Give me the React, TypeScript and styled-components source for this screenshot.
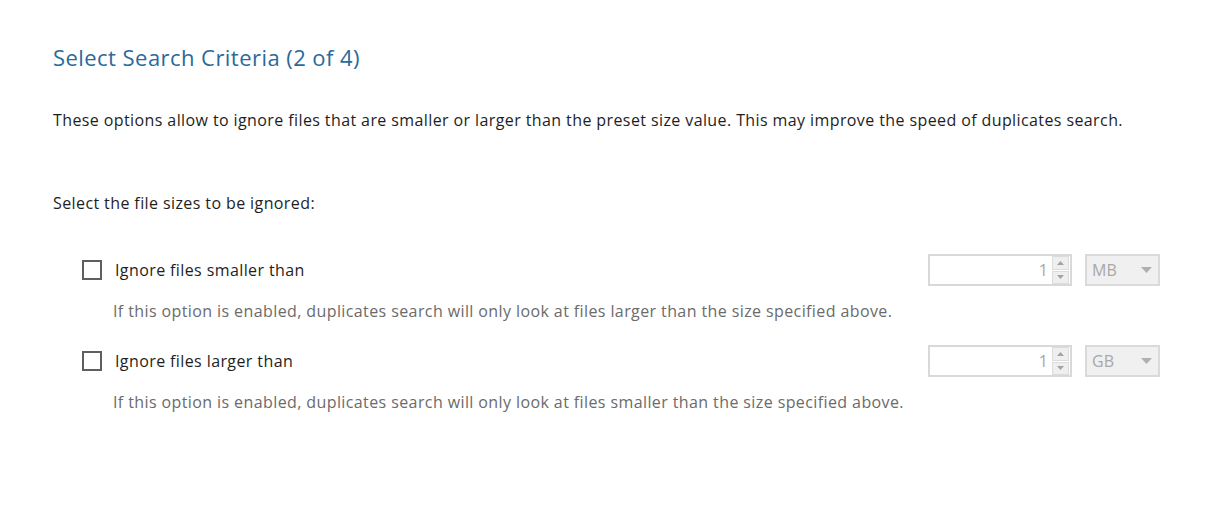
import React from "react";
import styled, { createGlobalStyle } from "styled-components";

const Global = createGlobalStyle`
  html, body { margin: 0; padding: 0; background: #ffffff; }
  body { font-family: "Open Sans", "Noto Sans", sans-serif; }
`;

const Page = styled.div`
  width: 1230px;
  height: 516px;
  box-sizing: border-box;
  padding: 42px 70px 0 53px;
  display: flex;
  flex-direction: column;
`;

const Title = styled.h1`
  margin: 0;
  font-size: 22px;
  line-height: 30px;
  letter-spacing: 0.45px;
  font-weight: 400;
  color: #2a6a9a;
`;

const BodyText = styled.p`
  margin: 0;
  font-size: 16px;
  line-height: 22px;
  letter-spacing: 0.4px;
  color: #1e1e1e;
`;

const Description = styled(BodyText)`
  margin-top: 37px;
`;

const SectionLabel = styled(BodyText)`
  margin-top: 61px;
`;

const Options = styled.div`
  margin-top: 40px;
  display: flex;
  flex-direction: column;
  gap: 23px;
`;

const Option = styled.div`
  display: flex;
  flex-direction: column;
`;

const OptionRow = styled.div`
  display: flex;
  align-items: center;
  height: 32px;
`;

const CheckLabel = styled.label`
  display: flex;
  align-items: center;
  gap: 13px;
  margin-left: 29px;
  flex: 1;
  font-size: 16px;
  letter-spacing: 0.4px;
  color: #1e1e1e;
`;

const Box = styled.span`
  width: 20px;
  height: 20px;
  box-sizing: border-box;
  border: 2px solid #5f5f5f;
  background: #ffffff;
  display: inline-block;
`;

const Hint = styled(BodyText)`
  margin: 14px 0 0 60px;
  color: #6b6b6b;
`;

const Controls = styled.div`
  display: flex;
  align-items: center;
  gap: 13px;
`;

const Spin = styled.div`
  width: 144px;
  height: 32px;
  box-sizing: border-box;
  border: 2px solid #d9d9d9;
  display: flex;
  align-items: stretch;
  background: #fff;
`;

const SpinValue = styled.div`
  flex: 1;
  text-align: right;
  padding-right: 4px;
  font-size: 16px;
  line-height: 28px;
  color: #a6a6a6;
`;

const SpinButtons = styled.div`
  width: 17px;
  display: flex;
  flex-direction: column;
  gap: 1px;
  margin-right: 1px;
`;

const SpinBtn = styled.div`
  flex: 1;
  box-sizing: border-box;
  border: 1px solid #dcdcdc;
  background: #efefef;
  display: flex;
  align-items: center;
  justify-content: center;
`;

const Combo = styled.div`
  width: 75px;
  height: 32px;
  box-sizing: border-box;
  border: 2px solid #dadada;
  background: #f0f0f0;
  display: flex;
  align-items: center;
  justify-content: space-between;
  padding: 0 6px 0 5px;
  font-size: 16px;
  color: #a8a8a8;
`;

const Arrow = ({ up }: { up?: boolean }) => (
  <svg width="7" height="4" viewBox="0 0 7 4">
    <polygon points={up ? "0,4 7,4 3.5,0" : "0,0 7,0 3.5,4"} fill="#a3a3a3" />
  </svg>
);

const ComboArrow = () => (
  <svg width="11" height="6" viewBox="0 0 11 6">
    <polygon points="0,0 11,0 5.5,6" fill="#b0b0b0" />
  </svg>
);

const SizeOption = ({ label, unit, hint }: { label: string; unit: string; hint: string }) => (
  <Option>
    <OptionRow>
      <CheckLabel>
        <Box />
        {label}
      </CheckLabel>
      <Controls>
        <Spin>
          <SpinValue>1</SpinValue>
          <SpinButtons>
            <SpinBtn><Arrow up /></SpinBtn>
            <SpinBtn><Arrow /></SpinBtn>
          </SpinButtons>
        </Spin>
        <Combo>
          <span>{unit}</span>
          <ComboArrow />
        </Combo>
      </Controls>
    </OptionRow>
    <Hint>{hint}</Hint>
  </Option>
);

export default function App() {
  return (
    <>
      <Global />
      <Page>
        <Title>Select Search Criteria (2 of 4)</Title>
        <Description>
          These options allow to ignore files that are smaller or larger than the preset size value. This may improve the speed of duplicates search.
        </Description>
        <SectionLabel>Select the file sizes to be ignored:</SectionLabel>
        <Options>
          <SizeOption
            label="Ignore files smaller than"
            unit="MB"
            hint="If this option is enabled, duplicates search will only look at files larger than the size specified above."
          />
          <SizeOption
            label="Ignore files larger than"
            unit="GB"
            hint="If this option is enabled, duplicates search will only look at files smaller than the size specified above."
          />
        </Options>
      </Page>
    </>
  );
}
